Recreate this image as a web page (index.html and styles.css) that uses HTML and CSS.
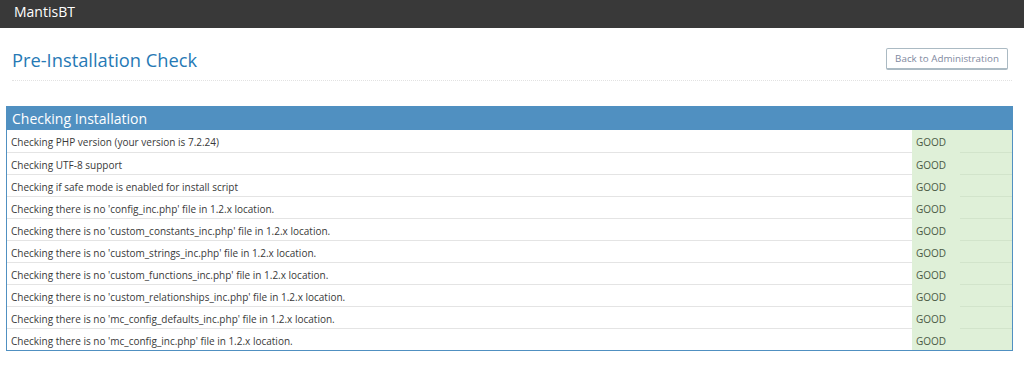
FILE: index.html
```html
<!DOCTYPE html>
<html>
<head>
<meta charset="utf-8">
<link rel="stylesheet" href="styles.css">
</head>
<body>
<div class="navbar"><span class="brand">MantisBT</span></div>
<div class="page-header">
  <h1>Pre-Installation Check</h1>
  <a class="btn">Back to Administration</a>
</div>
<div class="widget">
  <div class="widget-header">Checking Installation</div>
  <table class="checks">
    <tr><td class="desc">Checking PHP version (your version is 7.2.24)</td><td class="ok">GOOD</td><td class="ok extra"></td></tr>
    <tr><td class="desc">Checking UTF-8 support</td><td class="ok">GOOD</td><td class="ok extra"></td></tr>
    <tr><td class="desc">Checking if safe mode is enabled for install script</td><td class="ok">GOOD</td><td class="ok extra"></td></tr>
    <tr><td class="desc">Checking there is no 'config_inc.php' file in 1.2.x location.</td><td class="ok">GOOD</td><td class="ok extra"></td></tr>
    <tr><td class="desc">Checking there is no 'custom_constants_inc.php' file in 1.2.x location.</td><td class="ok">GOOD</td><td class="ok extra"></td></tr>
    <tr><td class="desc">Checking there is no 'custom_strings_inc.php' file in 1.2.x location.</td><td class="ok">GOOD</td><td class="ok extra"></td></tr>
    <tr><td class="desc">Checking there is no 'custom_functions_inc.php' file in 1.2.x location.</td><td class="ok">GOOD</td><td class="ok extra"></td></tr>
    <tr><td class="desc">Checking there is no 'custom_relationships_inc.php' file in 1.2.x location.</td><td class="ok">GOOD</td><td class="ok extra"></td></tr>
    <tr><td class="desc">Checking there is no 'mc_config_defaults_inc.php' file in 1.2.x location.</td><td class="ok">GOOD</td><td class="ok extra"></td></tr>
    <tr><td class="desc">Checking there is no 'mc_config_inc.php' file in 1.2.x location.</td><td class="ok">GOOD</td><td class="ok extra"></td></tr>
  </table>
</div>
</body>
</html>
```
FILE: styles.css
```css
* { box-sizing: border-box; }
body {
  margin: 0;
  font-family: "Open Sans", "Liberation Sans", sans-serif;
  background: #fff;
  color: #393939;
}
.navbar {
  height: 28px;
  background: #393939;
  display: flex;
  align-items: center;
  padding-left: 14px;
}
.brand {
  color: #fff;
  font-size: 14px;
  line-height: 1;
  margin-top: -5px;
}
.page-header {
  margin: 0 12px 0 12px;
  height: 53px;
  border-bottom: 1px dotted #e2e2e2;
  display: flex;
  align-items: center;
  justify-content: space-between;
  padding-top: 10px;
}
.page-header h1 {
  margin: 0;
  font-size: 18.3px;
  font-weight: 400;
  color: #2679b5;
}
.btn {
  display: inline-block;
  height: 22px;
  width: 122px;
  margin-right: 4px;
  border: 1px solid #abbac3;
  border-bottom-width: 2px;
  border-radius: 2px;
  font-size: 9.8px;
  line-height: 19px;
  text-align: center;
  color: #8089a0;
  background: #fff;
}
.widget {
  margin: 25px 11px 0 6px;
  border: 1px solid #5090c1;
}
.widget-header {
  background: #5090c1;
  color: #fff;
  font-size: 14px;
  height: 23px;
  line-height: 23px;
  padding-left: 5px;
}
.checks {
  width: 100%;
  border-collapse: collapse;
  font-size: 10px;
}
.checks td {
  height: 22px;
  padding: 3px 4px 0;
  border-top: 1px solid #e4e4e4;
  vertical-align: middle;
}
.checks tr:first-child td { border-top: none; }
.checks td.desc { color: #393939; }
.checks td.ok {
  background: #dff0d8;
  color: #4a5a44;
  width: 48px;
  border-top-color: #dff0d8;
}
.checks td.extra {
  width: 52px;
  border-top-color: #d2e4cb;
}
```
